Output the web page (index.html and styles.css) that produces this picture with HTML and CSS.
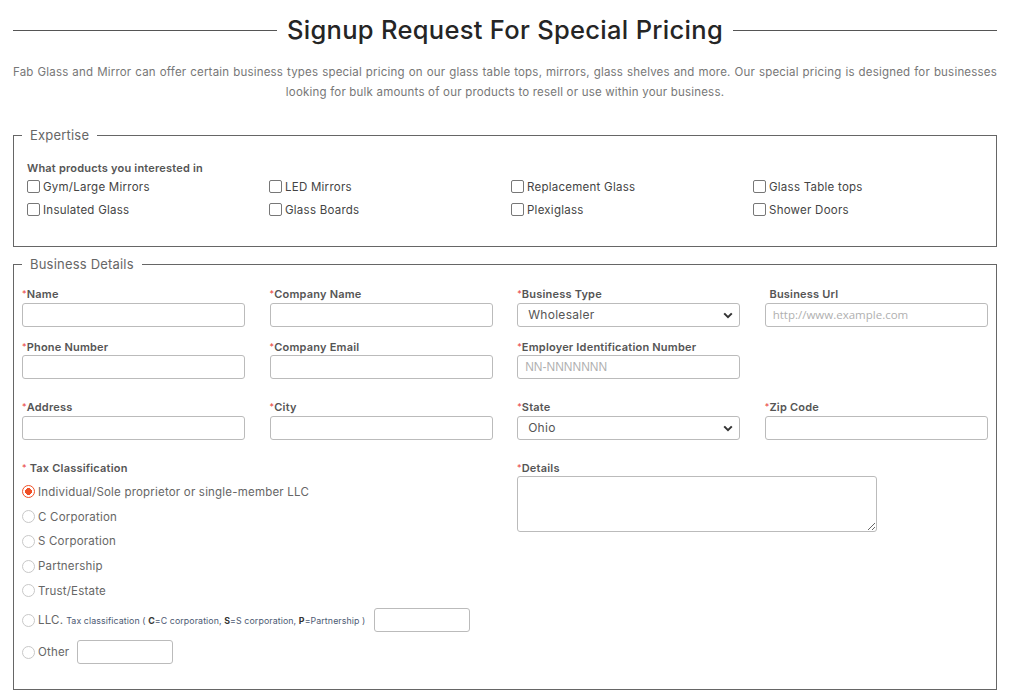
FILE: index.html
```html
<!DOCTYPE html>
<html lang="en">
<head>
<meta charset="utf-8">
<title>Signup Request For Special Pricing</title>
<link rel="stylesheet" href="styles.css">
</head>
<body>
<div class="page">
  <div class="title-row">
    <span class="rule"></span>
    <h1 class="title">Signup Request For Special Pricing</h1>
    <span class="rule"></span>
  </div>
  <p class="intro">Fab Glass and Mirror can offer certain business types special pricing on our glass table tops, mirrors, glass shelves and more. Our special pricing is designed for businesses looking for bulk amounts of our products to resell or use within your business.</p>

  <fieldset class="box expertise">
    <legend class="legend">Expertise</legend>
    <div class="question">What products you interested in</div>
    <div class="checks">
      <label class="check"><input type="checkbox" class="cb"><span>Gym/Large Mirrors</span></label>
      <label class="check"><input type="checkbox" class="cb"><span>LED Mirrors</span></label>
      <label class="check"><input type="checkbox" class="cb"><span>Replacement Glass</span></label>
      <label class="check"><input type="checkbox" class="cb"><span>Glass Table tops</span></label>
      <label class="check"><input type="checkbox" class="cb"><span>Insulated Glass</span></label>
      <label class="check"><input type="checkbox" class="cb"><span>Glass Boards</span></label>
      <label class="check"><input type="checkbox" class="cb"><span>Plexiglass</span></label>
      <label class="check"><input type="checkbox" class="cb"><span>Shower Doors</span></label>
    </div>
  </fieldset>

  <fieldset class="box details">
    <legend class="legend">Business Details</legend>
    <div class="fields">
      <div class="field">
        <label class="flabel"><span class="req">*</span>Name</label>
        <input class="input" type="text">
      </div>
      <div class="field">
        <label class="flabel"><span class="req">*</span>Company Name</label>
        <input class="input" type="text">
      </div>
      <div class="field">
        <label class="flabel"><span class="req">*</span>Business Type</label>
        <div class="select-wrap">
          <select class="select"><option>Wholesaler</option></select>
          <svg class="chev" width="10" height="7" viewBox="0 0 10 7"><path d="M1.2 1.4 L5 5.2 L8.8 1.4" fill="none" stroke="#333" stroke-width="2"/></svg>
        </div>
      </div>
      <div class="field">
        <label class="flabel"><span class="req hidden">*</span>Business Url</label>
        <input class="input url" type="text" placeholder="http://www.example.com">
      </div>

      <div class="field">
        <label class="flabel"><span class="req">*</span>Phone Number</label>
        <input class="input" type="text">
      </div>
      <div class="field">
        <label class="flabel"><span class="req">*</span>Company Email</label>
        <input class="input" type="text">
      </div>
      <div class="field">
        <label class="flabel"><span class="req">*</span>Employer Identification Number</label>
        <input class="input" type="text" placeholder="NN-NNNNNNN">
      </div>
      <div class="field"></div>

      <div class="field row3">
        <label class="flabel"><span class="req">*</span>Address</label>
        <input class="input" type="text">
      </div>
      <div class="field row3">
        <label class="flabel"><span class="req">*</span>City</label>
        <input class="input" type="text">
      </div>
      <div class="field row3">
        <label class="flabel"><span class="req">*</span>State</label>
        <div class="select-wrap">
          <select class="select"><option>Ohio</option></select>
          <svg class="chev" width="10" height="7" viewBox="0 0 10 7"><path d="M1.2 1.4 L5 5.2 L8.8 1.4" fill="none" stroke="#333" stroke-width="2"/></svg>
        </div>
      </div>
      <div class="field row3">
        <label class="flabel"><span class="req">*</span>Zip Code</label>
        <input class="input" type="text">
      </div>
    </div>

    <div class="lower">
      <div class="tax">
        <div class="flabel"><span class="req">*</span> Tax Classification</div>
        <div class="radios">
          <label class="radio"><input type="radio" name="tax" class="rb" checked><span>Individual/Sole proprietor or single-member LLC</span></label>
          <label class="radio"><input type="radio" name="tax" class="rb"><span>C Corporation</span></label>
          <label class="radio"><input type="radio" name="tax" class="rb"><span>S Corporation</span></label>
          <label class="radio"><input type="radio" name="tax" class="rb"><span>Partnership</span></label>
          <label class="radio"><input type="radio" name="tax" class="rb"><span>Trust/Estate</span></label>
          <label class="radio llc"><input type="radio" name="tax" class="rb"><span>LLC.</span><span class="note">Tax classification ( <b>C</b>=C corporation, <b>S</b>=S corporation, <b>P</b>=Partnership )</span><input class="input small llc-input" type="text"></label>
          <label class="radio other"><input type="radio" name="tax" class="rb"><span>Other</span><input class="input small other-input" type="text"></label>
        </div>
      </div>
      <div class="det">
        <label class="flabel"><span class="req">*</span>Details</label>
        <textarea class="textarea"></textarea>
      </div>
    </div>
  </fieldset>
</div>
</body>
</html>
```

FILE: styles.css
```css
* { box-sizing: border-box; }
html, body { margin: 0; padding: 0; background: #fff; }
body {
  font-family: "Inter", "Open Sans", "DejaVu Sans", sans-serif;
  color: #444;
}
.page {
  width: 984px;
  margin-left: 13px;
  padding-top: 12px;
}
.title-row {
  display: flex;
  align-items: center;
  gap: 10px;
  height: 36px;
}
.rule {
  flex: 1;
  height: 1px;
  background: #555;
}
.title {
  margin: 0;
  font-size: 25.5px;
  line-height: 36px;
  font-weight: 500;
  color: #252525;
  letter-spacing: 0.3px;
}
.intro {
  margin: 14px 0 0;
  font-size: 11.5px;
  line-height: 20px;
  color: #777;
  text-align: justify;
  text-align-last: center;
  letter-spacing: 0.2px;
}
.box {
  margin: 0;
  border: 1px solid #666;
  padding: 0 8px;
  min-width: 0;
}
.expertise {
  margin-top: 25px;
  padding: 0 8px 25px 13px;
}
.details {
  margin-top: 9px;
  padding: 0 8px 25px 8px;
}
.legend {
  font-size: 13px;
  line-height: 16px;
  color: #666;
  padding: 0 8px;
  margin-left: 0;
  letter-spacing: 0.2px;
}
.expertise .legend { margin-left: -5px; }
.question {
  margin-top: 18px;
  font-size: 11px;
  line-height: 14px;
  font-weight: 600;
  color: #555;
  letter-spacing: 0.2px;
}
.checks {
  display: grid;
  grid-template-columns: repeat(4, 242px);
}
.check {
  display: flex;
  align-items: center;
  height: 23px;
  font-size: 11.5px;
  color: #444;
  letter-spacing: 0.25px;
}
.cb {
  appearance: none;
  -webkit-appearance: none;
  width: 13px;
  height: 13px;
  margin: 0 3px 0 0;
  border: 1px solid #777;
  border-radius: 2px;
  background: #fff;
  flex: none;
}
.fields {
  margin-top: 15px;
  display: grid;
  grid-template-columns: repeat(4, 1fr);
  column-gap: 24.3px;
  row-gap: 13px;
}
.field { display: flex; flex-direction: column; }
.row3 { margin-top: 8px; }
.flabel {
  display: block;
  font-size: 11px;
  line-height: 14px;
  font-weight: 600;
  color: #555;
  letter-spacing: 0.2px;
  margin-bottom: 1.5px;
}
.req { color: #e8403a; font-weight: 400; font-size: 9px; vertical-align: 1px; }
.req.hidden { visibility: hidden; }
.input, .select, .textarea {
  height: 24px;
  border: 1px solid #bbb;
  border-radius: 3px;
  background: #fff;
  font-family: "Liberation Sans", Arial, sans-serif;
  font-size: 12px;
  color: #555;
  padding: 0 7px;
  margin: 0;
  width: 100%;
}
.input::placeholder { color: #b0b0b0; }
.input.url { font-family: "Open Sans", sans-serif; font-size: 11.5px; }
.select-wrap { position: relative; }
.select {
  appearance: none;
  -webkit-appearance: none;
  font-family: "Inter", "Open Sans", sans-serif;
  font-size: 12px;
  color: #555;
  padding: 0 10px;
  letter-spacing: 0.3px;
}
.chev {
  position: absolute;
  right: 7px;
  top: 9px;
  pointer-events: none;
}
.lower {
  margin-top: 21px;
  display: grid;
  grid-template-columns: 470px 1fr;
  column-gap: 25px;
}
.radios { margin-top: 5px; }
.radio {
  display: flex;
  align-items: center;
  height: 24.75px;
  font-size: 11.5px;
  color: #666;
  letter-spacing: 0.2px;
}
.rb {
  appearance: none;
  -webkit-appearance: none;
  width: 13px;
  height: 13px;
  margin: 0 3px 0 0;
  border: 1px solid #c8c8c8;
  border-radius: 50%;
  background: #fff;
  flex: none;
}
.rb:checked {
  border: 1.5px solid #ef4f26;
  background: radial-gradient(circle, #ef4f26 0 3.2px, #fff 3.6px);
}
.radio.llc { height: 24px; margin-top: 5px; }
.radio.other { height: 24px; margin-top: 8px; }
.note {
  font-size: 8.8px;
  color: #4d5a73;
  margin-left: 3px;
  letter-spacing: 0.1px;
}
.note b { color: #333; }
.input.small { width: 96px; }
.llc-input { margin-left: 9px; }
.other-input { margin-left: 8px; }
.textarea {
  display: block;
  width: 360px;
  height: 56px;
  resize: both;
  padding: 5px 7px;
}
```
